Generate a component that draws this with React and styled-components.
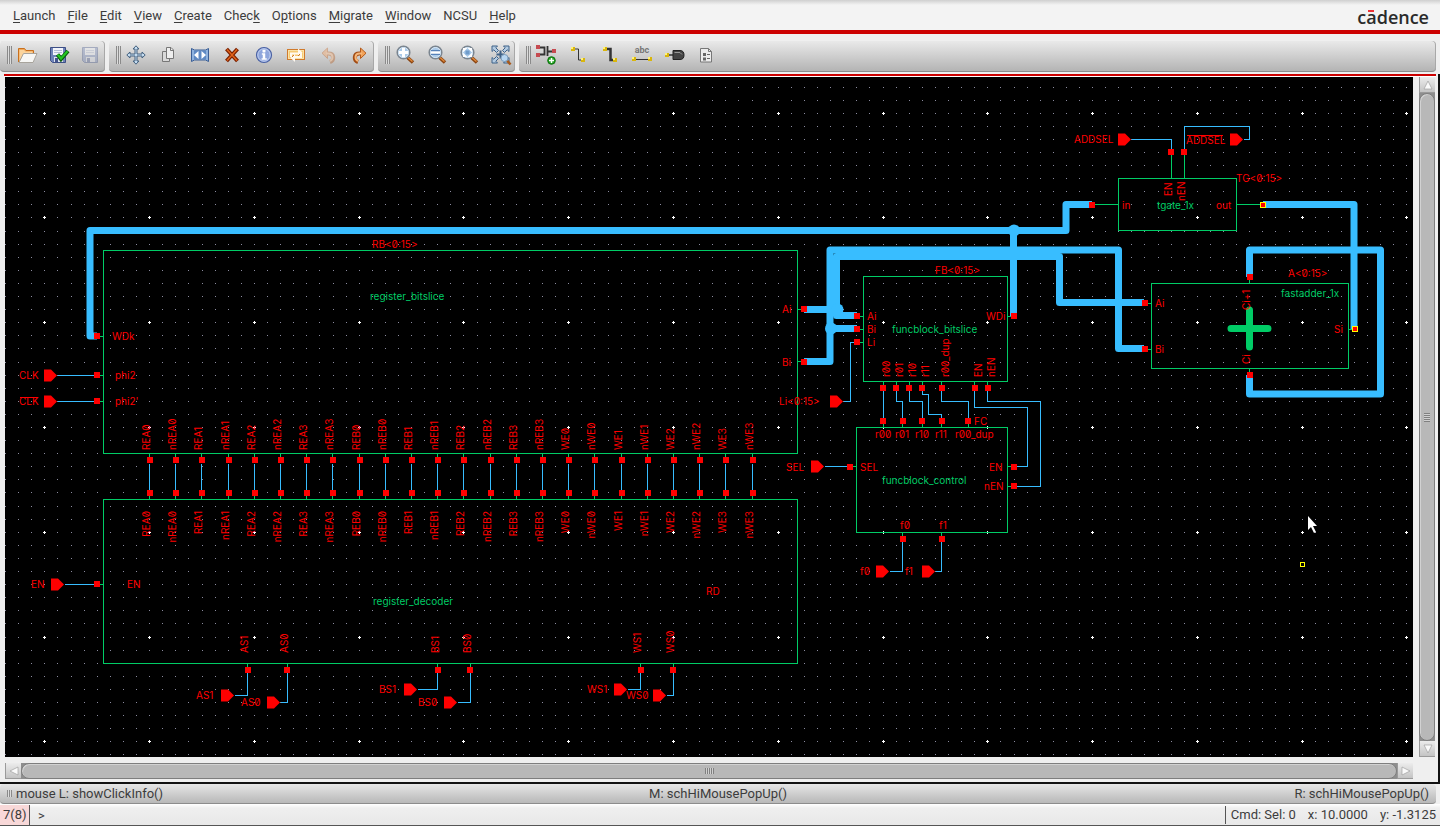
import React from 'react'
import styled, { createGlobalStyle } from 'styled-components'

const GlobalStyle = createGlobalStyle`
    * {
        box-sizing: border-box;
    }
    body {
        margin: 0;
        background-color: #efefef;
        color: #3c3c3c;
        font-family: Roboto, 'Liberation Sans', sans-serif;
        font-size: 13px;
    }
    button, input {
        font: inherit;
        color: inherit;
    }
`

const WIRE = '#38bdff'
const GREEN = '#00cc66'
const RED = '#ff0000'

// [text before the mnemonic, mnemonic, text after]
const menus = [
    ['', 'L', 'aunch'],
    ['', 'F', 'ile'],
    ['', 'E', 'dit'],
    ['', 'V', 'iew'],
    ['', 'C', 'reate'],
    ['Chec', 'k', ''],
    ['O', 'p', 'tions'],
    ['', 'M', 'igrate'],
    ['', 'W', 'indow'],
    ['NCSU', '', ''],
    ['', 'H', 'elp'],
]

/* ---------- toolbar icons ---------- */

const OpenIcon = () => (
    <Icon viewBox="0 0 20 20">
        <path d="M1.5 17V3.5h6l1.5 2h7.5V9" fill="#f0a95c" stroke="#c9701d" />
        <path d="M2.5 16V5h4.5l1.500 1.500h7V9H6z" fill="#fbd49c" />
        <path d="M2 17.500L6.500 8.500H20L16 17.500z" fill="#f7f7f5" stroke="#a8a49c" />
    </Icon>
)

const Floppy = ({ faded }) => (
    <g opacity={faded ? 0.35 : 1}>
        <path d="M1.500 2.500h15v15H3.500l-2-2z" fill="#6f83b8" stroke="#3d4f86" />
        <rect x="4" y="3" width="10" height="7" fill="#f2f4fa" />
        <path d="M5 5.500h8M5 7.500h8" stroke="#b4bdd6" />
        <rect x="5" y="12" width="9" height="5" fill="#dfe3ee" />
        <rect x="6" y="13" width="3" height="4" fill="#43548c" />
    </g>
)

const CheckSaveIcon = () => (
    <Icon viewBox="0 0 20 20">
        <Floppy />
        <path d="M8.500 9.500l3.500 4.500 7-8" fill="none" stroke="#0a5c0a" strokeWidth="4" />
        <path d="M8.800 9.800l3.200 3.700 6.500-7.300" fill="none" stroke="#22c522" strokeWidth="2.200" />
    </Icon>
)

const SaveIcon = () => (
    <Icon viewBox="0 0 20 20">
        <Floppy faded />
    </Icon>
)

const MoveIcon = () => (
    <Icon viewBox="0 0 20 20">
        <path
            d="M10 .8l3 3.200h-2v5h5v-2l3.200 3-3.200 3v-2h-5v5h2l-3 3.200-3-3.200h2v-5H4v2L.8 10 4 7v2h5V4H7z"
            fill="#c4dcf0"
            stroke="#44617f"
        />
    </Icon>
)

const CopyIcon = () => (
    <Icon viewBox="0 0 20 20">
        <path d="M4.500 6.500h7v10h-7z" fill="#d9d9d9" stroke="#777" />
        <path d="M8.500 2.500H13l2.500 2.500v8.500h-7z" fill="#eee" stroke="#777" />
        <path d="M12.500 2.500v3h3" fill="none" stroke="#777" />
    </Icon>
)

const StretchIcon = () => (
    <Icon viewBox="0 0 20 20">
        <path d="M1.500 3.500l3 1.500h11l3-1.500v13l-3-1.500h-11l-3 1.500z" fill="#8fb2de" stroke="#3b5f96" />
        <rect x="4" y="6" width="12" height="8" fill="#5f8ac4" />
        <path d="M8.500 6v8L4 10zM11.500 6v8L16 10z" fill="#fff" />
    </Icon>
)

const DeleteIcon = () => (
    <Icon viewBox="0 0 20 20">
        <path d="M4.500 4l11 12M15.500 4l-11 12" stroke="#7a2000" strokeWidth="4" />
        <path d="M5 4.500l10 11M15 4.500l-10 11" stroke="#e2641b" strokeWidth="1.500" />
    </Icon>
)

const InfoIcon = () => (
    <Icon viewBox="0 0 20 20">
        <circle cx="10" cy="10" r="7.500" fill="#8fa6dc" stroke="#4a61a3" strokeWidth="1.200" />
        <circle cx="10" cy="10" r="6.200" fill="none" stroke="#c3d0f0" />
        <path d="M8 8.500h3v5h1.500v1H7.800v-1H9v-4H8zM8.800 5h2.400v2.200H8.800z" fill="#fff" stroke="#fff" strokeWidth=".5" />
    </Icon>
)

const RepeatIcon = () => (
    <Icon viewBox="0 0 20 20">
        <rect x="1.500" y="4.500" width="17" height="10" fill="#f6ca72" stroke="#d07a2c" />
        <rect x="2.500" y="5.500" width="15" height="8" fill="none" stroke="#fbe3a8" />
        <path d="M4 12V7.500h8V3.500l4.500 4-4.500 4V9.500H6V12z" fill="#fffaf0" />
        <path d="M16 7.500V13H9v4l-4.500-4 4.500-4v2h5V9z" fill="#fffaf0" />
        <path d="M6 12l2-2M14 9l-2 2" stroke="#d07a2c" />
    </Icon>
)

const UndoIcon = () => (
    <Icon viewBox="0 0 20 20">
        <g opacity=".45">
            <path d="M8 8.500h2.500c6 0 6 7 1.500 8.500" fill="none" stroke="#b86a35" strokeWidth="4" />
            <path d="M9.500 3v10.500L4 8.200z" fill="#f0a56a" stroke="#c4733c" />
            <path d="M8 8.500h2.500c5 0 5 6 1.500 7.500" fill="none" stroke="#f6b98a" strokeWidth="2" />
        </g>
    </Icon>
)

const RedoIcon = () => (
    <Icon viewBox="0 0 20 20">
        <path d="M12 8.500H9.500c-6 0-6 7-1.500 8.500" fill="none" stroke="#a24c14" strokeWidth="4" />
        <path d="M10.500 3v10.500L16 8.200z" fill="#f3a45b" stroke="#b55b1c" />
        <path d="M12 8.500H9.500c-5 0-5 6-1.500 7.500" fill="none" stroke="#f6b77a" strokeWidth="2" />
    </Icon>
)

const Lens = ({ children }) => (
    <Icon viewBox="0 0 20 20">
        <path d="M12.500 12.500l5.500 5" stroke="#8a4310" strokeWidth="3.500" />
        <path d="M13 12.500l4.500 4" stroke="#e08a3c" strokeWidth="1.500" />
        <circle cx="8.500" cy="7.500" r="6.300" fill="#a9c9e8" stroke="#7b858f" strokeWidth="1.500" />
        <circle cx="8.500" cy="7.500" r="5" fill="none" stroke="#d9e8f5" />
        {children}
    </Icon>
)

const ZoomInIcon = () => (
    <Lens>
        <path d="M8.500 3v9M4 7.500h9" stroke="#fff" strokeWidth="3" />
    </Lens>
)

const ZoomOutIcon = () => (
    <Lens>
        <rect x="4" y="5" width="9" height="5" fill="#5681b8" />
        <path d="M4 7.500h9" stroke="#fff" strokeWidth="2.500" />
    </Lens>
)

const ZoomFitIcon = () => (
    <Lens>
        <rect x="6.500" y="5.500" width="4" height="4" fill="#6f9ccb" />
        <path d="M4.500 6V3.500H7zM10 3.500h2.500V6zM12.500 9v2.500H10zM7 11.500H4.500V9z" fill="#fff" stroke="#fff" strokeWidth="1.200" />
    </Lens>
)

const CORNER = 'M1 6.500V1h5.500L4.800 2.800 7.500 5.500 5.500 7.500 2.800 4.800z'

const ZoomAreaIcon = () => (
    <Icon viewBox="0 0 20 20">
        {[0, 90, 180, 270].map(turn => (
            <path key={turn} d={CORNER} fill="#b3cbe2" stroke="#3f6288" transform={`rotate(${turn} 9.500 9.500)`} />
        ))}
        <path d="M9.500 5.500v8M5.500 9.500h8" stroke="#3f6288" strokeWidth="2" />
        <path d="M16 15.500l3.500 4" stroke="#a8591b" strokeWidth="2.500" />
        <circle cx="13.500" cy="13" r="3.500" fill="#b7d6f2" stroke="#7d9dbb" />
    </Icon>
)

const InstanceIcon = () => (
    <Icon viewBox="0 0 20 20">
        <path d="M4 2.500h4.500v2M4 9.500h4.500v-2M8.500 3.500v6M11.500 1v10M12 6.500h4" fill="none" stroke="#333" strokeWidth="1.800" />
        <rect x="0" y="0" width="4" height="4" fill="#c64a50" />
        <rect x="0" y="8" width="4" height="4" fill="#c64a50" />
        <rect x="16" y="4" width="4" height="4" fill="#c64a50" />
        <circle cx="15.500" cy="15.500" r="3.800" fill="#1fa51f" stroke="#0b6d0b" />
        <path d="M15.500 13v5M13 15.500h5" stroke="#fff" strokeWidth="1.500" />
    </Icon>
)

const Ends = ({ points }) => points.map(([x, y]) => (
    <g key={x}>
        <rect x={x} y={y} width="4" height="4" fill="#d9b60c" />
        <rect x={x} y={y} width="2" height="2" fill="#fff27a" />
    </g>
))

const WireIcon = ({ wide }) => (
    <Icon viewBox="0 0 20 20">
        <path d="M7 4h3.500v11H14" fill="none" stroke="#333" strokeWidth={wide ? 2.5 : 1} />
        <Ends points={[[3, 2], [13, 13]]} />
    </Icon>
)

const LabelIcon = () => (
    <Icon viewBox="0 0 20 20">
        <IconText x="10" y="8" textAnchor="middle">abc</IconText>
        <path d="M3 14.500h14" stroke="#333" />
        <Ends points={[[0, 12], [16, 12]]} />
    </Icon>
)

const PinIcon = () => (
    <Icon viewBox="0 0 20 20">
        <path d="M3 10h6" stroke="#333" strokeWidth="1.500" />
        <path d="M9 5.500h7q4 0 4 4.500t-4 4.500H9z" fill="#444" stroke="#222" strokeLinejoin="round" />
        <path d="M10.500 7.500H16l2 2" fill="none" stroke="#999" />
        <Ends points={[[1, 8]]} />
    </Icon>
)

const FormIcon = () => (
    <Icon viewBox="0 0 20 20">
        <path d="M4.500 3.500h8l3 3v10.500h-11z" fill="#ececec" stroke="#777" />
        <path d="M12.500 3.500v3h3" fill="none" stroke="#777" />
        <path d="M7 8h3v3H7zM7 12.500h3v3H7z" fill="#666" />
        <path d="M11 9.500h3M11 13.500h3" stroke="#666" />
    </Icon>
)

const toolGroups = [
    [['Open', OpenIcon], ['Check and Save', CheckSaveIcon], ['Save', SaveIcon]],
    [
        ['Move', MoveIcon], ['Copy', CopyIcon], ['Stretch', StretchIcon], ['Delete', DeleteIcon],
        ['Properties', InfoIcon], ['Repeat', RepeatIcon], ['Undo', UndoIcon], ['Redo', RedoIcon],
    ],
    [['Zoom In', ZoomInIcon], ['Zoom Out', ZoomOutIcon], ['Zoom Fit', ZoomFitIcon], ['Zoom Area', ZoomAreaIcon]],
    [
        ['Create Instance', InstanceIcon], ['Create Wire', WireIcon], ['Create Wide Wire', () => <WireIcon wide />],
        ['Create Label', LabelIcon], ['Create Pin', PinIcon], ['Form', FormIcon],
    ],
]

/* ---------- schematic ---------- */

// One path with a pixel at every minor grid point, one with a cross at every major one
const buildGrid = () => {
    let minor = ''
    let major = ''
    for (let i = -3; i < 145; i++) {
        for (let j = -2; j < 80; j++) {
            const x = Math.floor(44.9 + i * 13.096)
            const y = Math.floor(113.22 + j * 13.095)
            if (i % 8 === 0 && j % 8 === 0) {
                major += `M${x - 1} ${y}h3v1h-3zM${x} ${y - 1}h1v3h-1z`
            } else {
                minor += `M${x} ${y}h1v1h-1z`
            }
        }
    }
    return { minor, major }
}
const grid = buildGrid()

const columns = ['REA', 'REB', 'WE'].flatMap(bus =>
    [0, 1, 2, 3].flatMap(n => [bus + n, 'n' + bus + n])
)
const columnX = k => Math.floor(149.5 + k * 26.2)

const boxes = [
    [103, 250, 797, 453],
    [103, 499, 797, 663],
    [863, 276, 1007, 381],
    [856, 427, 1007, 532],
    [1118, 178, 1236, 230],
    [1151, 283, 1348, 368],
]

const buses = [
    'M97 336H90V230.500H1066V204.500H1092',
    'M1013.500 230V316',
    'M804 361.500H830V250H1118.500V348.500H1144',
    'M804 309.500H837M830 328.500H857',
    'M857 315.500H836.500V256.500H1059.500V302.500H1144',
    'M1263 204.500H1354V329',
    'M1249.500 277V250H1380.500V394H1249.500V375',
]

const junctions = [[1014, 230.5], [837.5, 309.5], [831, 328.5]]

const wires = [
    'M57 375H97M57 401H97M64 584H97',
    'M843 401H850V342H857M824 466H850',
    'M883 388V421M896 388V401H902V421M909 388V401H922V421',
    'M922 388V394H928V414H941V421M941 388V401H968V421',
    'M974 388V407H1027V466H1014M987 388V401H1040V486H1014',
    'M889 571H902V539M935 571H941V539',
    'M234 695H247V670M280 702H287V670',
    'M417 689H437V670M457 702H470V670',
    'M627 689H640V670M666 695H673V670',
    'M1131 139H1171V152M1243 139H1249V126H1184V152',
]

const stubs = [
    'M97 336H103M97 375H103M97 401H103M97 584H103M797 309H804M797 361H804',
    'M857 316H863M857 329H863M857 342H863M1007 316H1014',
    'M883 381V388M896 381V388M909 381V388M922 381V388M941 381V388M974 381V388M987 381V388',
    'M883 421V427M902 421V427M922 421V427M941 421V427M968 421V427',
    'M850 466H856M1007 466H1014M1007 486H1014M902 532V539M941 532V539',
    'M247 663V670M287 663V670M437 663V670M470 663V670M640 663V670M673 663V670',
    'M1171 152V178M1184 152V178M1092 204H1118M1236 204H1263',
    'M1144 303H1151M1144 349H1151M1348 329H1354M1249 277V283M1249 368V375',
]

const pins = [
    [97, 336], [97, 375], [97, 401], [97, 584], [804, 309], [804, 362],
    [857, 316], [857, 329], [857, 342], [1014, 316],
    [883, 388], [896, 388], [909, 388], [922, 388], [942, 388], [975, 388], [988, 388],
    [883, 421], [903, 421], [922, 421], [942, 421], [968, 421],
    [850, 467], [1014, 467], [1014, 486], [903, 539], [942, 539],
    [248, 670], [287, 670], [438, 670], [470, 670], [641, 670], [673, 670],
    [1171, 152], [1184, 152], [1092, 205], [1145, 303], [1145, 349], [1250, 277], [1250, 375],
]

const selectedPins = [[1263, 205], [1355, 329]]

const ports = [
    [44, 375], [44, 401], [51, 584], [830, 401], [811, 466], [876, 571], [922, 571],
    [221, 695], [267, 702], [404, 689], [444, 702], [614, 689], [653, 695], [1118, 139], [1230, 139],
]

const labels = [
    ['RB<0:15>', 372, 248], ['WDk', 112, 340], ['phi2', 115, 379], ["phi2'", 115, 405],
    ['CLK', 19, 379], ['CLK', 19, 405], ['EN', 31, 588], ['EN', 127, 588], ['RD', 706, 595],
    ['Ai', 782, 313], ['Bi', 782, 366], ['Li<0:15>', 779, 405], ['SEL', 786, 471],
    ['AS1', 196, 699], ['AS0', 241, 706], ['BS1', 379, 693], ['BS0', 418, 706],
    ['WS1', 587, 693], ['WS0', 626, 699],
    ['FB<0:15>', 935, 274], ['Ai', 867, 320], ['Bi', 867, 333], ['Li', 867, 346], ['WDi', 986, 320],
    ['FC', 974, 425], ['r00', 875, 438], ['r01', 895, 438], ['r10', 915, 438], ['r11', 935, 438],
    ['r00_dup', 955, 438], ['SEL', 860, 471], ['EN', 989, 471], ['nEN', 984, 490],
    ['f0', 900, 529], ['f1', 939, 529], ['f0', 860, 575], ['f1', 905, 575],
    ['ADDSEL', 1074, 143], ['ADDSEL', 1186, 144], ['TG<0:15>', 1236, 182], ['in', 1122, 209], ['out', 1216, 209],
    ['A<0:15>', 1288, 277], ['Ai', 1155, 307], ['Bi', 1155, 353], ['Si', 1334, 333],
]

const uprightLabels = [
    ['r00', 890, 377], ['r01', 903, 377], ['r10', 916, 377], ['r11', 929, 377], ['r00_dup', 949, 377],
    ['EN', 982, 377], ['nEN', 995, 377],
    ['AS1', 248, 653], ['AS0', 288, 653], ['BS1', 439, 653], ['BS0', 471, 653], ['WS1', 641, 653], ['WS0', 674, 653],
    ['EN', 1172, 196], ['nEN', 1185, 201], ['Ci+1', 1250, 310], ['Ci', 1250, 364],
]

const names = [
    ['register_bitslice', 370, 300],
    ['register_decoder', 373, 605],
    ['funcblock_bitslice', 892, 333],
    ['funcblock_control', 882, 484],
    ['tgate_1x', 1157, 209],
    ['fastadder_1x', 1281, 297],
]

const Upright = ({ x, y, children, end }) => (
    <Label transform={`translate(${x} ${y}) rotate(-90)`} textAnchor={end ? 'end' : 'start'}>{children}</Label>
)

const Schematic = () => (
    <Canvas role="img" aria-label="Schematic">
        <g transform="translate(-5 -77)">
            <g shapeRendering="crispEdges">
                <path d={grid.minor} fill="#8c8ca0" />
                <path d={grid.major} fill="#fff" />
            </g>
            <g fill="none" stroke={WIRE} strokeWidth="7" strokeLinejoin="round">
                {buses.map(d => <path key={d} d={d} />)}
            </g>
            {junctions.map(([x, y]) => <circle key={x} cx={x} cy={y} r="6" fill={WIRE} />)}
            <g transform="translate(.5 .5)" fill="none" shapeRendering="crispEdges">
                <g stroke={WIRE}>
                    {wires.map(d => <path key={d} d={d} />)}
                    {columns.map((name, k) => <path key={name} d={`M${columnX(k)} 463V490`} />)}
                </g>
                <g stroke={GREEN}>
                    {boxes.map(([x, y, right, bottom]) => (
                        <rect key={x + '-' + y} x={x} y={y} width={right - x} height={bottom - y} />
                    ))}
                    {stubs.map(d => <path key={d} d={d} />)}
                    {columns.map((name, k) => <path key={name} d={`M${columnX(k)} 453V460M${columnX(k)} 493V499`} />)}
                </g>
                <path d="M19 397H37M1186 135H1222" stroke={RED} />
            </g>
            <path d="M1249.500 310V347M1231 328.500H1268" stroke={GREEN} strokeWidth="7" strokeLinecap="round" />
            <g fill={RED} shapeRendering="crispEdges">
                {pins.map(([x, y]) => <rect key={x + '-' + y} x={x - 3} y={y - 3} width="6" height="6" />)}
                {columns.map((name, k) => (
                    <path key={name} d={`M${columnX(k) - 2} 457h6v6h-6zM${columnX(k) - 2} 490h6v6h-6z`} />
                ))}
                {selectedPins.map(([x, y]) => (
                    <rect key={x} x={x - 2.5} y={y - 2.5} width="5" height="5" stroke="#ffff00" />
                ))}
            </g>
            {ports.map(([x, y]) => (
                <path key={x + '-' + y} d={`M${x} ${y - 5.5}h7l6 6l-6 6h-7z`} fill={RED} />
            ))}
            {labels.map(([text, x, y]) => <Label key={text + x + y} x={x} y={y}>{text}</Label>)}
            {uprightLabels.map(([text, x, y]) => <Upright key={text + x} x={x} y={y}>{text}</Upright>)}
            {columns.map((name, k) => (
                <React.Fragment key={name}>
                    <Upright x={columnX(k) + 1} y={450}>{name}</Upright>
                    <Upright x={columnX(k) + 1} y={511} end>{name}</Upright>
                </React.Fragment>
            ))}
            {names.map(([text, x, y]) => <BlockName key={text} x={x} y={y}>{text}</BlockName>)}
            <rect x="1300.500" y="562.500" width="4" height="4" fill="none" stroke="#ffff00" />
            <path d="M1308 516v14l3-3 3 6 2-1-3-6h4z" fill="#fff" />
        </g>
    </Canvas>
)

const Arrow = ({ turn }) => (
    <svg width="10" height="10" viewBox="0 0 10 10">
        <path d="M5 1l4 8H1z" fill="#fafafa" stroke="#a0a0a0" strokeWidth=".7" transform={`rotate(${turn} 5 5)`} />
    </svg>
)

export default function App() {
    return (
        <Page>
            <GlobalStyle />
            <MenuBar>
                <Menus>
                    {menus.map(([before, key, after]) => (
                        <MenuButton key={before + key + after} type="button">
                            {before}{key && <u>{key}</u>}{after}
                        </MenuButton>
                    ))}
                </Menus>
                <Logo>
                    c<Macron>a</Macron>dence
                </Logo>
            </MenuBar>
            <ToolBar>
                {toolGroups.map((tools, i) => (
                    <ToolGroup key={i} $grow={i === toolGroups.length - 1}>
                        <Handle />
                        {tools.map(([title, Glyph]) => (
                            <ToolButton key={title} type="button" aria-label={title}>
                                <Glyph />
                            </ToolButton>
                        ))}
                    </ToolGroup>
                ))}
            </ToolBar>
            <Work>
                <RedLine />
                <View>
                    <Schematic />
                    <ScrollBar $vertical>
                        <ScrollButton type="button" aria-label="Scroll up"><Arrow turn={0} /></ScrollButton>
                        <Thumb $vertical><Grip $vertical /></Thumb>
                        <ScrollButton type="button" aria-label="Scroll down"><Arrow turn={180} /></ScrollButton>
                    </ScrollBar>
                    <ScrollBar>
                        <ScrollButton type="button" aria-label="Scroll left"><Arrow turn={-90} /></ScrollButton>
                        <Thumb><Grip /></Thumb>
                        <ScrollButton type="button" aria-label="Scroll right"><Arrow turn={90} /></ScrollButton>
                    </ScrollBar>
                </View>
            </Work>
            <MouseBar>
                <MouseHint><SmallHandle />mouse L: showClickInfo()</MouseHint>
                <MouseHint>M: schHiMousePopUp()</MouseHint>
                <MouseHint>R: schHiMousePopUp()</MouseHint>
            </MouseBar>
            <PromptBar>
                <Counter>7(8)</Counter>
                <PromptLabel htmlFor="prompt">&gt;</PromptLabel>
                <Prompt id="prompt" type="text" />
                <Readout>
                    <span>Cmd: Sel: 0</span>
                    <span>x: 10.0000</span>
                    <span>y: -1.3125</span>
                </Readout>
            </PromptBar>
        </Page>
    )
}

const Page = styled.div`
    display: flex;
    flex-direction: column;
    height: 100vh;
`
const MenuBar = styled.header`
    display: flex;
    justify-content: space-between;
    align-items: center;
    height: 34px;
    padding: 0 11px 0 7px;
    background: linear-gradient(#cfcfcf 0, #dedede 2px, #f3f3f3 5px);
    border-bottom: 4px solid #cc0000;
`
const Menus = styled.nav`
    display: flex;
    padding-top: 2px;
`
const MenuButton = styled.button`
    padding: 0 6px;
    border: none;
    background: none;
    line-height: 20px;
    u {
        text-underline-offset: 2px;
    }
`
const Logo = styled.div`
    padding-top: 4px;
    color: #2a2a2a;
    font-family: 'Open Sans', sans-serif;
    font-size: 18px;
    font-weight: 600;
    line-height: 24px;
`
const Macron = styled.span`
    position: relative;
    &::after {
        content: '';
        position: absolute;
        top: 5px;
        left: 2px;
        width: 6px;
        height: 2px;
        background-color: #ee3338;
    }
`
const ToolBar = styled.div`
    display: flex;
    gap: 4px;
    height: 40px;
    padding: 7px 4px 2px 0;
`
const ToolGroup = styled.div`
    display: flex;
    align-items: center;
    gap: 4px;
    flex-grow: ${props => props.$grow ? 1 : 0};
    padding: 0 0 2px 7px;
    background: linear-gradient(#e9e9e9, #b4b4b4);
    border-radius: 4px;
    border-bottom: 1px solid #8c8c8c;
    box-shadow: inset -1px 0 #a8a8a8;
`
const Handle = styled.span`
    width: 5px;
    height: 18px;
    margin-right: -3px;
    background: repeating-linear-gradient(90deg, #8a8a8a 0 1px, #dcdcdc 1px 2px);
`
const SmallHandle = styled(Handle)`
    height: 7px;
    margin-right: 4px;
`
const ToolButton = styled.button`
    display: flex;
    align-items: center;
    justify-content: center;
    width: 28px;
    height: 28px;
    padding: 0;
    border: none;
    background: none;
`
const Icon = styled.svg`
    display: block;
    width: 20px;
    height: 20px;
    overflow: visible;
    fill: none;
`
const IconText = styled.text`
    fill: #777;
    font-size: 9px;
    font-weight: bold;
`
const Work = styled.main`
    display: flex;
    flex-direction: column;
    flex: 1;
    min-height: 0;
    padding-left: 4px;
    border: solid #111;
    border-width: 0 2px 2px 0;
`
const RedLine = styled.div`
    height: 3px;
    margin-right: 2px;
    border-bottom: 1px solid #fff;
    background-color: #cc0000;
`
const View = styled.div`
    display: grid;
    grid-template-columns: 1fr 16px;
    grid-template-rows: 1fr 16px;
    gap: 6px;
    flex: 1;
    min-height: 0;
    padding: 0 3px 3px 1px;
`
const Canvas = styled.svg`
    display: block;
    width: 100%;
    height: 100%;
    min-height: 0;
    background-color: #000;
`
const Label = styled.text`
    fill: ${RED};
    font-family: Inter, 'Liberation Sans', sans-serif;
    font-size: 10px;
    font-feature-settings: 'zero';
`
const BlockName = styled(Label)`
    fill: ${GREEN};
`
const ScrollBar = styled.div`
    display: flex;
    flex-direction: ${props => props.$vertical ? 'column' : 'row'};
    min-width: 0;
    min-height: 0;
    background-color: #8e8e8e;
`
const ScrollButton = styled.button`
    display: flex;
    align-items: center;
    justify-content: center;
    width: 16px;
    height: 16px;
    padding: 0;
    border: 1px solid #9a9a9a;
    border-width: 0 0 1px 1px;
    background: linear-gradient(#ececec, #c4c4c4);
`
const Thumb = styled.div`
    display: flex;
    flex: 1;
    align-items: center;
    justify-content: center;
    border: 1px solid #7e7e7e;
    border-radius: 8px;
    background-color: #b8b8b8;
    box-shadow: inset 1px 1px #d2d2d2;
`
const Grip = styled.span`
    width: ${props => props.$vertical ? '6px' : '9px'};
    height: ${props => props.$vertical ? '9px' : '6px'};
    background: repeating-linear-gradient(${props => props.$vertical ? '180deg' : '90deg'}, #808080 0 1px, #d0d0d0 1px 2px);
`
const MouseBar = styled.div`
    display: grid;
    grid-template-columns: 1fr auto 1fr;
    align-items: center;
    height: 20px;
    margin-right: 4px;
    padding: 0 7px;
    background: linear-gradient(#e6e6e6, #b8b8b8);
    border-radius: 4px;
    border-bottom: 1px solid #8c8c8c;
`
const MouseHint = styled.span`
    display: flex;
    align-items: center;
    &:last-child {
        justify-content: flex-end;
    }
`
const PromptBar = styled.footer`
    display: flex;
    align-items: center;
    height: 22px;
    padding-top: 1px;
    background: linear-gradient(#fff, #efefef 4px, #e8e8e8);
    border-bottom: 1px solid #555;
`
const Counter = styled.span`
    width: 30px;
    padding-left: 3px;
    background-color: #f8d8d8;
    border-right: 1px solid #555;
    line-height: 20px;
`
const PromptLabel = styled.label`
    padding: 0 4px 0 8px;
`
const Prompt = styled.input`
    flex: 1;
    min-width: 0;
    border: none;
    outline: none;
    background: none;
`
const Readout = styled.div`
    display: flex;
    gap: 12px;
    padding: 0 4px 0 5px;
    border-left: 1px solid #555;
    line-height: 18px;
`
